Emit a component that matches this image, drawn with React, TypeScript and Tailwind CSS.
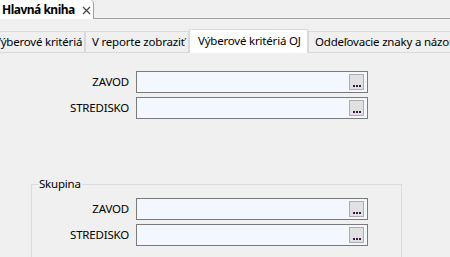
import type { ReactNode } from 'react'

const FONT = "font-['Segoe_UI','Noto_Sans','Open_Sans',sans-serif]"
const TXT = 'text-[11.5px] tracking-[-0.2px]'

function Lookup({ label }: { label: string }) {
  return (
    <>
      <div className={`text-right ${TXT} leading-[22px] text-black`}>{label}</div>
      <div className="h-[22px] w-[232px] border border-[#7a7a7a] bg-[#f3f8fe] flex items-center justify-end pr-[3px]">
        <div className="h-[16px] w-[15px] border border-[#adadad] bg-[#e1e1e1] flex items-end justify-center pb-[2px]">
          <span className="flex gap-[1px]">
            <span className="h-[2px] w-[2px] bg-[#3a1a4a]" />
            <span className="h-[2px] w-[2px] bg-[#3a1a4a]" />
            <span className="h-[2px] w-[2px] bg-[#3a1a4a]" />
          </span>
        </div>
      </div>
    </>
  )
}

function FieldGrid({ children }: { children: ReactNode }) {
  return (
    <div className="grid grid-cols-[129px_232px] gap-x-[7px] gap-y-[4px]">{children}</div>
  )
}

function Tab({ label, width, active }: { label: string; width: string; active?: boolean }) {
  return (
    <div
      className={
        active
          ? `${width} h-[24px] bg-white border border-b-0 border-[#d9d9d9] pl-[8px] ${TXT} leading-[22px] whitespace-nowrap overflow-hidden shrink-0`
          : `${width} h-[22px] bg-[#f0f0f0] border border-[#d9d9d9] pl-[6px] ${TXT} leading-[19px] whitespace-nowrap overflow-hidden shrink-0`
      }
    >
      {label}
    </div>
  )
}

export default function App() {
  return (
    <div className={`${FONT} w-[450px] h-[257px] overflow-hidden bg-[#f0f0f0] text-black`}>
      {/* document tab strip */}
      <div className="flex h-[19px] border-b border-[#a0a0a0]">
        <div className="w-[94px] h-[19px] bg-white border-r border-[#a0a0a0] rounded-tr-[4px] flex items-center pl-[2px] gap-[7px] whitespace-nowrap">
          <span className="text-[12px] tracking-[-0.5px] font-bold leading-none">Hlavná kniha</span>
          <svg width="9" height="9" viewBox="0 0 9 9" className="mt-[1px]">
            <path d="M1 1L8 8M8 1L1 8" stroke="#444" strokeWidth="1.2" />
          </svg>
        </div>
      </div>

      {/* inner tabs */}
      <div className="mt-[10px] flex items-start h-[24px]">
        <div className="-ml-[13px] flex items-start">
          <div className="mt-[2px]"><Tab label="Výberové kritériá" width="w-[98px]" /></div>
          <div className="mt-[2px]"><Tab label="V reporte zobraziť" width="w-[104px]" /></div>
          <Tab label="Výberové kritériá OJ" width="w-[119px]" active />
          <div className="mt-[2px]"><Tab label="Oddeľovacie znaky a názory" width="w-[160px]" /></div>
        </div>
      </div>

      <div className="mt-[18px]">
        <FieldGrid>
          <Lookup label="ZAVOD" />
          <Lookup label="STREDISKO" />
        </FieldGrid>
      </div>

      <div className="mt-[65px] ml-[31px] w-[371px] h-[80px] border border-[#dcdcdc] relative">
        <span className={`absolute -top-[9px] left-[6px] bg-[#f0f0f0] px-[1px] ${TXT} leading-[16px]`}>Skupina</span>
        <div className="-ml-[32px] mt-[13px]">
          <FieldGrid>
            <Lookup label="ZAVOD" />
            <Lookup label="STREDISKO" />
          </FieldGrid>
        </div>
      </div>
    </div>
  )
}
